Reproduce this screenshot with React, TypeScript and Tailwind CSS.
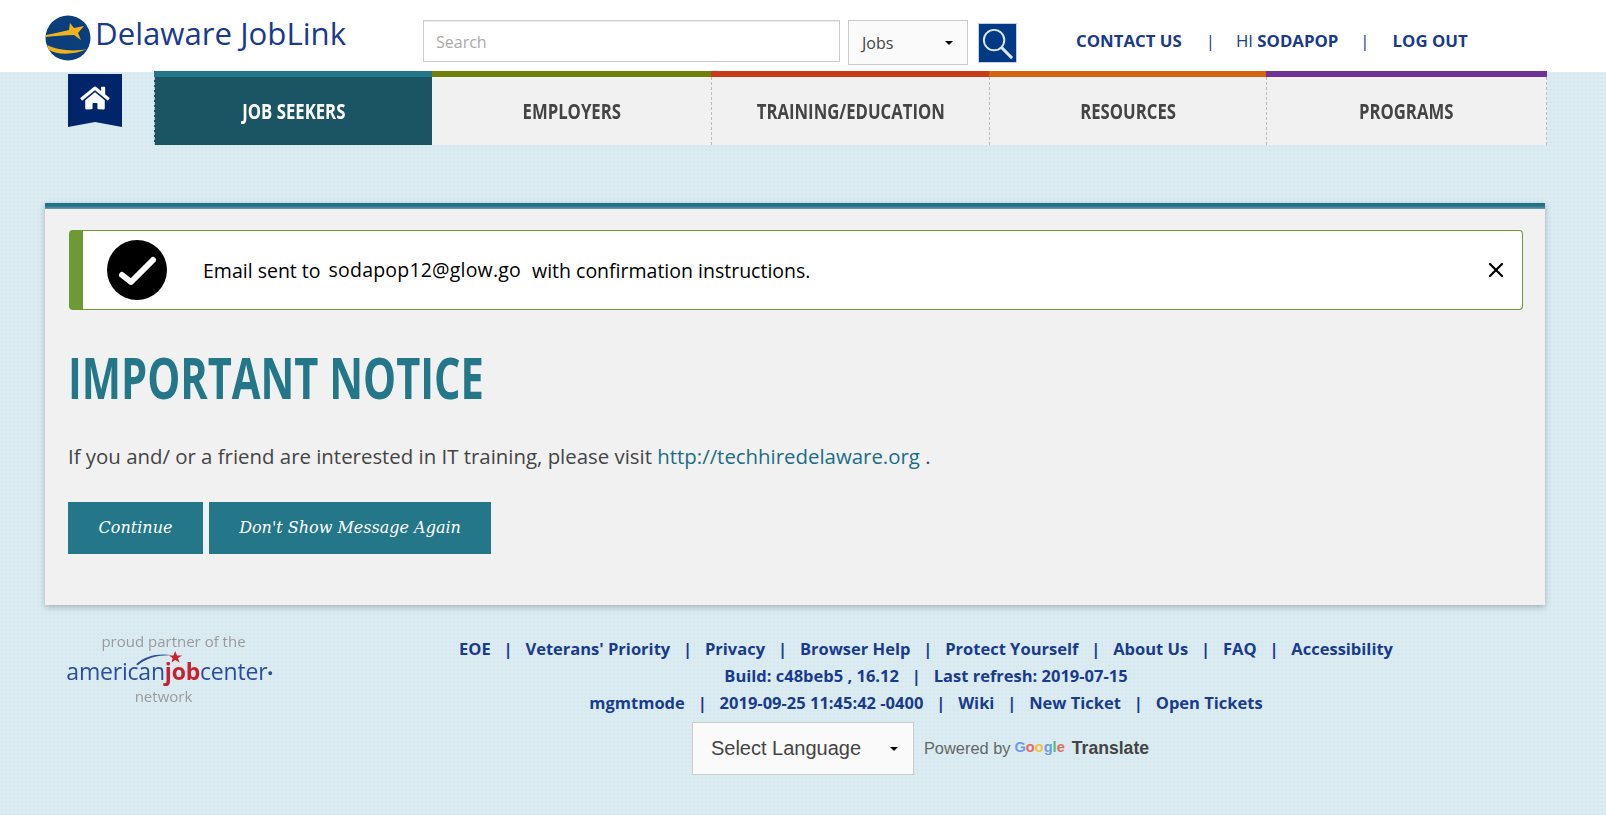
import { FaHome } from "react-icons/fa"
import { X } from "lucide-react"

const navItems = [
  { label: "JOB SEEKERS", width: "w-[278px]", bar: "bg-[#237789]", cell: "bg-[#1b5564] text-white border-l border-dashed border-l-[#b9c4c8]" },
  { label: "EMPLOYERS", width: "w-[279px]", bar: "bg-[#71800b]", cell: "bg-[#f1f1f1] text-[#444]" },
  { label: "TRAINING/EDUCATION", width: "w-[278px]", bar: "bg-[#c93a17]", cell: "bg-[#f1f1f1] text-[#444] border-l border-dashed border-l-[#bbb]" },
  { label: "RESOURCES", width: "w-[277px]", bar: "bg-[#d66310]", cell: "bg-[#f1f1f1] text-[#444] border-l border-dashed border-l-[#bbb]" },
  { label: "PROGRAMS", width: "w-[281px]", bar: "bg-[#703297]", cell: "bg-[#f1f1f1] text-[#444] border-x border-dashed border-x-[#bbb]" },
]

function Logo() {
  return (
    <svg viewBox="0 0 46 46" className="w-[46px] h-[46px] shrink-0">
      <circle cx="23" cy="23" r="22.5" fill="#0b3f7c" />
      <path d="M1 20 C10 18 17 17 24 15 L25 8 L29 13 L39 11 L33 18 L36 25 L29 20 C20 20 10 21 1 22 Z" fill="#f2b21c" />
      <path d="M2 30 C12 35 28 37 42 34 C30 40 12 40 4 35 Z" fill="#f2b21c" />
    </svg>
  )
}

function JobCenterLogo() {
  return (
    <div className="relative w-[215px] shrink-0 ml-[62px] -mt-[3px] text-center font-['Open_Sans',sans-serif] blur-[0.4px]">
      <p className="ml-[8px] text-[15px] leading-[20px] font-medium text-[#9b9b9b]">proud partner of the</p>
      <p className="mt-[6px] text-[23px] leading-[28px] tracking-[-0.2px] font-medium text-[#2b4d9b] whitespace-nowrap">
        american<span className="font-bold text-[#c8202f]">job</span>center<sup className="text-[9px]">●</sup>
      </p>
      <svg viewBox="0 0 60 18" className="absolute left-[72px] top-[20px] w-[54px] h-[16px]">
        <path d="M2 15 C12 5 28 2 44 5 C30 4 14 7 4 16 Z" fill="#2b4d9b" />
        <path d="M46 0 L48 5 L54 5 L49 8 L51 13 L46 10 L42 13 L43 8 L39 5 L44 5 Z" fill="#d0202f" />
      </svg>
      <p className="mt-[1px] -ml-[12px] text-[15px] leading-[20px] font-medium text-[#9b9b9b]">network</p>
    </div>
  )
}

export default function App() {
  return (
    <div className="min-h-[815px] bg-[#daecf2] bg-[radial-gradient(#d4e8ee_0.8px,transparent_1px)] bg-[length:4px_4px] font-['Open_Sans',sans-serif]">
      <header className="h-[72px] bg-white flex items-start">
        <div className="flex items-center ml-[45px] mt-[15px] w-[378px]">
          <Logo />
          <span className="ml-[4px] text-[31.2px] leading-[36px] -mt-[11px] text-[#1a3a8c] whitespace-nowrap">Delaware JobLink</span>
        </div>
        <div className="mt-[20px] w-[417px] h-[42px] bg-white border border-[#ccc] shadow-[inset_0_1px_1px_rgba(0,0,0,0.075)] pl-[12px] pt-[1px] flex items-center text-[16px] text-[#aaa]">
          Search
        </div>
        <div className="ml-[8px] mt-[20px] w-[120px] h-[45px] bg-[#fafafa] border border-[#ccc] pl-[13px] pr-[14px] flex items-center justify-between text-[16px] text-[#444]">
          Jobs
          <span className="w-0 h-0 border-x-[4px] border-x-transparent border-t-[4px] border-t-black" />
        </div>
        <button className="ml-[10px] mt-[23px] w-[39px] h-[40px] bg-[#003a85] border border-[#c4d0e4] flex items-center justify-center">
          <svg viewBox="0 0 38 38" className="w-[37px] h-[37px]" fill="none" stroke="#dce6f2">
            <circle cx="15.5" cy="15.5" r="10.5" strokeWidth="2" />
            <path d="M23 23 L34 34" strokeWidth="3" />
          </svg>
        </button>
        <nav className="ml-[59px] mt-[29px] flex items-center text-[16.8px] leading-[24px] text-[#1a3a8c] whitespace-nowrap">
          <a className="font-bold">CONTACT US</a>
          <span className="ml-[24px] mr-[21px]">|</span>
          <span>HI <b>SODAPOP</b></span>
          <span className="ml-[22px] mr-[23px]">|</span>
          <a className="font-bold">LOG OUT</a>
        </nav>
      </header>

      <div className="flex -mt-px pl-[68px]">
        <div className="w-[54px] h-[53px] mt-[3px] relative shrink-0">
          <svg viewBox="0 0 54 54" className="w-full h-full" preserveAspectRatio="none">
            <polygon points="0,0 54,0 54,54 27,49 0,54" fill="#00256b" />
          </svg>
          <FaHome className="absolute left-[12px] top-[11px] w-[30px] h-[26px] text-white" />
        </div>
        <div className="ml-[32px] flex">
          {navItems.map((item) => (
            <a key={item.label} className={`flex flex-col ${item.width}`}>
              <div className={`h-[6px] ${item.bar}`} />
              <div className={`h-[68px] pb-[2px] flex items-center justify-center text-[22px] font-bold ${item.cell}`}>
                <span className="inline-block scale-x-[0.76] whitespace-nowrap">{item.label}</span>
              </div>
            </a>
          ))}
        </div>
      </div>

      <main className="mt-[58px] ml-[45px] w-[1500px] h-[402px] bg-[#f1f1f1] shadow-[0_2px_6px_rgba(0,0,0,0.25)]">
        <div className="h-[6px] bg-gradient-to-b from-[#1f7386] from-50% to-[#6f9fae]" />
        <div className="pl-[24px] pr-[22px] pt-[21px]">
          <div className="h-[80px] bg-white border border-[#6d9a32] border-l-[14px] rounded-[4px] flex items-center">
            <div className="ml-[24px] w-[60px] h-[60px] rounded-full bg-black flex items-center justify-center shrink-0">
              <svg viewBox="0 0 60 60" className="w-[60px] h-[60px]" fill="none" stroke="white" strokeWidth="6" strokeLinecap="round" strokeLinejoin="round">
                <path d="M15 35 L24 42 L46 20" />
              </svg>
            </div>
            <p className="ml-[36px] pt-[2px] text-[19.5px] leading-[26px] text-black whitespace-nowrap">
              Email sent to <span className="ml-[3px] mr-[6px] tracking-[0.2px] relative -top-px">sodapop12@glow.go</span> with confirmation instructions.
            </p>
            <X className="ml-auto mr-[14px] w-[24px] h-[24px] text-black" strokeWidth={2.2} />
          </div>

          <h1 className="mt-[29px] text-[57px] leading-[76px] font-bold text-[#237789] origin-left scale-x-[0.73] whitespace-nowrap -ml-px">
            IMPORTANT NOTICE
          </h1>

          <p className="mt-[27px] -ml-px text-[20.4px] leading-[28px] text-[#444] whitespace-nowrap">
            If you and/ or a friend are interested in IT training, please visit{" "}
            <a className="text-[#1c6c86]">http://techhiredelaware.org</a> .
          </p>

          <div className="mt-[32px] -ml-px flex gap-[6px] font-['DejaVu_Serif',serif] italic text-white text-[16px]">
            <button className="w-[135px] h-[52px] bg-[#237789]">Continue</button>
            <button className="w-[282px] h-[52px] bg-[#237789]">Don't Show Message Again</button>
          </div>
        </div>
      </main>

      <footer className="flex mt-[29px]">
        <JobCenterLogo />
        <div className="ml-[149px] w-[1000px] text-center text-[16.5px] leading-[27px] font-bold text-[#1a3a8c] pt-[1px]">
          <p className="whitespace-pre">EOE   |   Veterans' Priority   |   Privacy   |   Browser Help   |   Protect Yourself   |   About Us   |   FAQ   |   Accessibility</p>
          <p className="whitespace-pre">Build: c48beb5 , 16.12   |   Last refresh: 2019-07-15</p>
          <p className="whitespace-pre">mgmtmode   |   2019-09-25 11:45:42 -0400   |   Wiki   |   New Ticket   |   Open Tickets</p>
          <div className="mt-[6px] flex items-center justify-center font-normal font-['Liberation_Sans',sans-serif] -ml-[11px]">
            <div className="w-[222px] h-[53px] bg-[#fafafa] border border-[#ccc] pl-[18px] pr-[15px] flex items-center justify-between text-[20px] text-[#444]">
              Select Language
              <span className="w-0 h-0 border-x-[4px] border-x-transparent border-t-[4px] border-t-black" />
            </div>
            <span className="ml-[10px] text-[16.4px] text-[#666]">Powered by</span>
            <span className="ml-[4px] text-[14.6px] font-bold -mt-[2px]">
              <span className="text-[#6d9de8]">G</span>
              <span className="text-[#e8695e]">o</span>
              <span className="text-[#f1c23c]">o</span>
              <span className="text-[#6d9de8]">g</span>
              <span className="text-[#5bb974]">l</span>
              <span className="text-[#e8695e]">e</span>
            </span>
            <span className="ml-[7px] text-[17.6px] font-bold text-[#444]">Translate</span>
          </div>
        </div>
      </footer>
    </div>
  )
}
